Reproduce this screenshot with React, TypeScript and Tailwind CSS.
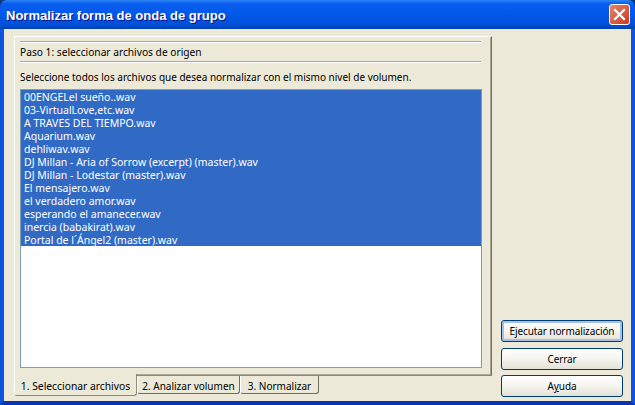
const files: string[] = [
  "00ENGELel sueño..wav",
  "03-VirtualLove,etc.wav",
  "A TRAVES DEL TIEMPO.wav",
  "Aquarium.wav",
  "dehliwav.wav",
  "DJ Millan - Aria of Sorrow (excerpt) (master).wav",
  "DJ Millan - Lodestar (master).wav",
  "El mensajero.wav",
  "el verdadero amor.wav",
  "esperando el amanecer.wav",
  "inercia (babakirat).wav",
  "Portal de l´Ángel2 (master).wav",
];

function XpButton({ label, isDefault, className = "" }: { label: React.ReactNode; isDefault?: boolean; className?: string }) {
  return (
    <button
      type="button"
      className={
        "h-[22px] w-[122px] rounded-[3px] border border-[#003c74] bg-gradient-to-b from-white via-[#f5f4ee] to-[#e3e1d6] text-[10px] leading-none tracking-[-0.1px] text-black " +
        (isDefault ? "shadow-[inset_0_0_0_2px_#a4bfe8] " : "") +
        className
      }
    >
      {label}
    </button>
  );
}

function Tab({ label, active, width }: { label: string; active?: boolean; width: string }) {
  return active ? (
    <div className={"z-10 -mt-[2px] flex h-[22px] items-center justify-center rounded-b-[3px] border-x border-b border-l-white border-r-[#8b8977] border-b-[#8b8977] bg-[#ece9d8] pt-[5px] text-[10.3px] " + width}>
      {label}
    </div>
  ) : (
    <div className={"flex h-[18px] items-center justify-center rounded-b-[3px] border-x border-b border-l-white border-r-[#716f64] border-b-[#716f64] bg-[#ece9d8] pt-[3px] text-[10px] " + width}>
      {label}
    </div>
  );
}

export default function App() {
  return (
    <div className="flex h-[405px] w-[635px] flex-col overflow-hidden bg-[#12357f] font-['Noto_Sans',sans-serif] text-[10.5px] text-black">
      {/* title bar */}
      <div className="flex h-[29px] shrink-0 items-center justify-between rounded-t-[7px] bg-[linear-gradient(to_bottom,#2f86f5_0%,#0a5ef0_12%,#0058e8_50%,#0050d8_85%,#0040b0_100%)] pl-[6px] pr-[5px]">
        <span className="pt-[2px] font-['Liberation_Sans',sans-serif] text-[13px] font-bold text-white [text-shadow:1px_1px_#0f1089]">
          Normalizar forma de onda de grupo
        </span>
        <div className="flex h-[21px] w-[21px] items-center justify-center rounded-[3px] border border-white bg-gradient-to-br from-[#e9816a] to-[#c8391a]">
          <svg width="13" height="13" viewBox="0 0 13 13">
            <path d="M2 2 L11 11 M11 2 L2 11" stroke="white" strokeWidth="2.2" strokeLinecap="square" />
          </svg>
        </div>
      </div>

      {/* body */}
      <div className="flex min-h-0 flex-1 border-x-4 border-b-4 border-x-[#0b55e0] border-b-[#0a34b0] bg-[#ece9d8]">
        <div className="ml-[10px] mt-[7px] flex w-[478px] flex-col">
          <div className="flex h-[340px] flex-col border border-b-[#8b8977] border-l-white border-r-[#716f64] border-t-white pl-[5px] pt-[4px] shadow-[inset_-1px_-1px_#aca899]">
            <div className="mr-[10px] flex h-[21px] items-center border-y border-y-[#aca899] pt-[2px] text-[10.2px] shadow-[0_1px_white,inset_0_1px_white]">
              Paso 1: seleccionar archivos de origen
            </div>
            <p className="mt-[8px] h-[14px] text-[10px] leading-[14px]">
              Seleccione todos los archivos que desea normalizar con el mismo nivel de volumen.
            </p>
            <div className="mt-[5px] h-[279px] w-[462px] border border-[#7f9db9] bg-white">
              <ul>
                {files.map((f) => (
                  <li key={f} className="h-[13px] bg-[#316ac5] pl-[3px] leading-[15px] text-white">
                    {f}
                  </li>
                ))}
              </ul>
            </div>
          </div>
          <div className="flex">
            <Tab label="1. Seleccionar archivos" active width="w-[123px]" />
            <Tab label="2. Analizar volumen" width="w-[103px]" />
            <Tab label="3. Normalizar" width="w-[79px]" />
          </div>
        </div>
        <div className="ml-[9px] mt-[291px] flex flex-col gap-[5px]">
          <XpButton label="Ejecutar normalización" isDefault />
          <XpButton label="Cerrar" className="mt-[1px]" />
          <XpButton label={<span>A<u>y</u>uda</span>} />
        </div>
      </div>
    </div>
  );
}
